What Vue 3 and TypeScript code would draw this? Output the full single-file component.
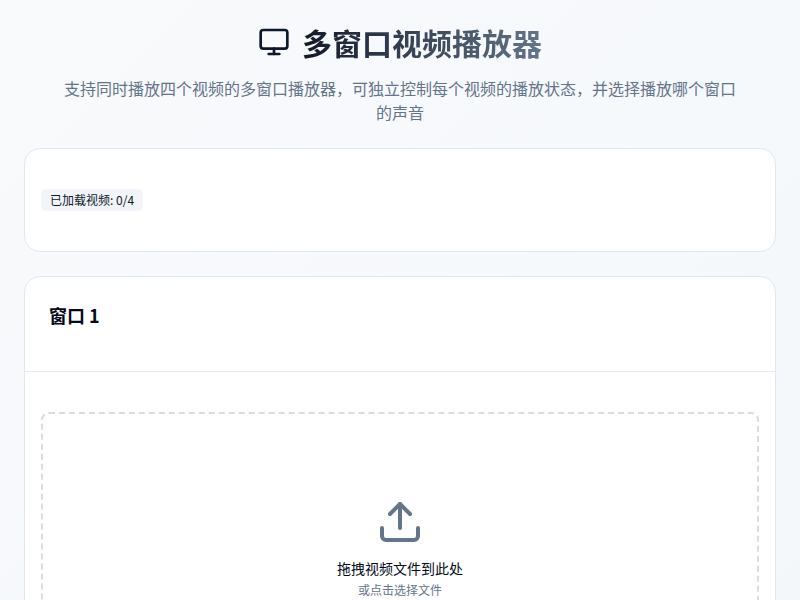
<script setup lang="ts">
const loaded: number = 0
const total: number = 4
</script>

<template>
  <div class="page">
    <header class="head">
      <div class="title-row">
        <svg class="monitor" width="32" height="32" viewBox="0 0 24 24" fill="none" stroke="currentColor" stroke-width="2" stroke-linecap="round" stroke-linejoin="round">
          <rect x="2" y="3" width="20" height="14" rx="2" />
          <line x1="8" y1="21" x2="16" y2="21" />
          <line x1="12" y1="17" x2="12" y2="21" />
        </svg>
        <h1 class="title">多窗口视频播放器</h1>
      </div>
      <p class="sub">支持同时播放四个视频的多窗口播放器，可独立控制每个视频的播放状态，并选择播放哪个窗口的声音</p>
    </header>

    <section class="card status">
      <span class="badge">已加载视频: {{ loaded }}/{{ total }}</span>
    </section>

    <section class="card player">
      <div class="player-head">
        <h2 class="player-title">窗口 1</h2>
      </div>
      <div class="player-body">
        <div class="drop">
          <svg class="upload" width="48" height="48" viewBox="0 0 24 24" fill="none" stroke="currentColor" stroke-width="2" stroke-linecap="round" stroke-linejoin="round">
            <path d="M21 15v4a2 2 0 0 1-2 2H5a2 2 0 0 1-2-2v-4" />
            <polyline points="17 8 12 3 7 8" />
            <line x1="12" y1="3" x2="12" y2="15" />
          </svg>
          <p class="drop-main">拖拽视频文件到此处</p>
          <p class="drop-sub">或点击选择文件</p>
        </div>
      </div>
    </section>
  </div>
</template>

<style>
html, body { margin: 0; height: 100%; overflow: hidden; }
html { background: linear-gradient(135deg, #f8fafc 0%, #f1f5f9 100%) 0 0 / 100% 1900px no-repeat; }
</style>

<style scoped>
.page {
  padding: 24px;
  box-sizing: border-box;
  display: flex;
  flex-direction: column;
  gap: 24px;
  font-family: "Noto Sans CJK SC", sans-serif;
  color: #020817;
}
.head {
  display: flex;
  flex-direction: column;
  align-items: center;
  text-align: center;
  gap: 16px;
}
.title-row {
  display: flex;
  align-items: center;
  justify-content: center;
  gap: 12px;
  height: 36px;
  background: linear-gradient(90deg, #020817, #64748b);
  -webkit-background-clip: text;
  background-clip: text;
}
.monitor { color: #0f172a; flex: none; }
.title {
  margin: 0;
  font-size: 30px;
  line-height: 36px;
  font-weight: 700;
  color: transparent;
}
.sub {
  margin: 0;
  max-width: 672px;
  font-size: 16px;
  line-height: 24px;
  color: #64748b;
}
.card {
  background: #fff;
  border: 1px solid #e2e8f0;
  border-radius: 16px;
}
.status {
  padding: 40px 16px;
  display: flex;
  align-items: center;
}
.badge {
  display: inline-block;
  padding: 2px 9px;
  border-radius: 6px;
  background: #f1f5f9;
  font-size: 12px;
  line-height: 18px;
  color: #0f172a;
}
.player-head {
  padding: 24px;
  height: 95px;
  box-sizing: border-box;
  border-bottom: 1px solid #e2e8f0;
}
.player-title {
  margin: 0;
  font-size: 18px;
  line-height: 28px;
  font-weight: 600;
}
.player-body { padding: 40px 16px 24px; }
.drop {
  border: 2px dashed #d8dce3;
  border-radius: 8px;
  padding: 84px 16px 48px;
  display: flex;
  flex-direction: column;
  align-items: center;
  text-align: center;
}
.upload { color: #64748b; margin-bottom: 12px; }
.drop-main {
  margin: 0;
  font-size: 14px;
  line-height: 20px;
  color: #020817;
}
.drop-sub {
  margin: 4px 0 0;
  font-size: 12px;
  line-height: 16px;
  color: #64748b;
}
</style>
